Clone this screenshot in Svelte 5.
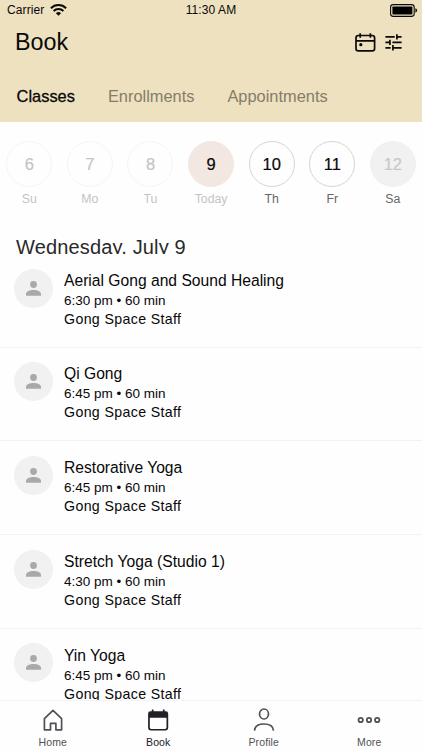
<script>
  const days = [
    { n: 6, label: 'Su', kind: 'past' },
    { n: 7, label: 'Mo', kind: 'past' },
    { n: 8, label: 'Tu', kind: 'past' },
    { n: 9, label: 'Today', kind: 'today' },
    { n: 10, label: 'Th', kind: 'open' },
    { n: 11, label: 'Fr', kind: 'open' },
    { n: 12, label: 'Sa', kind: 'closed' }
  ];
  const classes = [
    { title: 'Aerial Gong and Sound Healing', time: '6:30 pm' },
    { title: 'Qi Gong', time: '6:45 pm' },
    { title: 'Restorative Yoga', time: '6:45 pm' },
    { title: 'Stretch Yoga (Studio 1)', time: '4:30 pm' },
    { title: 'Yin Yoga', time: '6:45 pm' }
  ];
</script>

<div class="screen">
  <header>
    <div class="status">
      <div class="carrier">
        <span>Carrier</span>
        <svg width="17" height="12" viewBox="0 0 17 12" fill="none" stroke="#0b0a08" stroke-width="2">
          <path d="M.9 4.2a10.8 10.8 0 0 1 15.2 0M3.6 7a7 7 0 0 1 9.8 0" />
          <path d="M5.9 9.2a3.7 3.7 0 0 1 5.2 0L8.5 11.8z" fill="#0b0a08" stroke="none" />
        </svg>
      </div>
      <span class="clock">11:30 AM</span>
      <svg class="battery" width="28" height="13" viewBox="0 0 28 13">
        <rect x=".6" y=".6" width="23.6" height="11.8" rx="2.6" fill="none" stroke="#0b0a08" stroke-width="1.1" />
        <rect x="2.4" y="2.4" width="20" height="8.2" rx=".8" fill="#000" />
        <path d="M25.4 4.3q1.7.6 1.7 2.2t-1.7 2.2z" fill="#0b0a08" />
      </svg>
    </div>
    <div class="title">
      <h1>Book</h1>
      <div class="actions">
        <svg width="21" height="19" viewBox="0 0 21 19" fill="none" stroke="#0b0a08" stroke-width="1.7">
          <rect x="1" y="2.5" width="18.6" height="15.3" rx="2.4" />
          <path d="M1 7.8h18.6M5.2.3v4.5M15.4.3v4.5" />
          <circle cx="5.8" cy="11.7" r="1.6" fill="#0b0a08" stroke="none" />
        </svg>
        <svg width="17" height="17" viewBox="0 0 17 17" fill="none" stroke="#0b0a08" stroke-width="1.7">
          <path d="M.4 2.9h9.3M11.9 2.9h4.7M11.9.2v5.4M.4 8.4h4.5M7.4 8.4h9.2M4.9 5.8v5.3M.4 13.8h5.2M7.9 13.8h8.7M7.9 11.1v5.5" />
        </svg>
      </div>
    </div>
    <nav class="tabs">
      <span class="active">Classes</span>
      <span>Enrollments</span>
      <span>Appointments</span>
    </nav>
  </header>

  <section class="week">
    {#each days as d}
      <div class="day {d.kind}">
        <div class="num">{d.n}</div>
        <span>{d.label}</span>
      </div>
    {/each}
  </section>

  <h2>Wednesday, July 9</h2>

  <main>
    {#each classes as c}
      <article>
        <div class="avatar">
          <svg width="15" height="15" viewBox="0 0 15 15" fill="#a9a9a9">
            <circle cx="7.5" cy="3.5" r="3.4" />
            <path d="M0 14.8v-1.9C0 10.3 4 9 7.5 9s7.5 1.3 7.5 3.9v1.9z" />
          </svg>
        </div>
        <div class="info">
          <div class="name">{c.title}</div>
          <div class="time">{c.time} • 60 min</div>
          <div class="staff">Gong Space Staff</div>
        </div>
      </article>
    {/each}
  </main>

  <footer>
    <div class="item">
      <svg width="24" height="24" viewBox="0 0 24 24" fill="none" stroke="#505156" stroke-width="1.7">
        <path d="M3.4 10.6L12 2.4l8.6 8.200v11.200h-5.700v-6.400H9.500v6.400H3.400z" stroke-linejoin="round" />
      </svg>
      <span>Home</span>
    </div>
    <div class="item current">
      <svg width="24" height="24" viewBox="0 0 24 24">
        <path d="M4.500 3.300h1.300V1.600h1.700v1.700h9.400V1.600h1.700v1.700h1.200a2.400 2.400 0 0 1 2.400 2.400v14.400a2.400 2.400 0 0 1-2.400 2.400H4.500a2.400 2.400 0 0 1-2.400-2.400V5.700a2.400 2.400 0 0 1 2.400-2.400zM3.800 9.800v9.700q0 1.400 1.400 1.400h13.900q1.400 0 1.400-1.400V9.800z" fill="#202126" fill-rule="evenodd" />
      </svg>
      <span>Book</span>
    </div>
    <div class="item">
      <svg width="24" height="24" viewBox="0 0 24 24" fill="none" stroke="#505156" stroke-width="1.7">
        <ellipse cx="12" cy="6" rx="4.500" ry="5" />
        <path d="M2.500 22.600c.3-4.400 4.200-6.600 9.500-6.600s9.200 2.200 9.500 6.600" />
      </svg>
      <span>Profile</span>
    </div>
    <div class="item">
      <svg width="24" height="24" viewBox="0 0 24 24" fill="none" stroke="#505156" stroke-width="1.8">
        <circle cx="3.700" cy="12" r="2.200" />
        <circle cx="12" cy="12" r="2.200" />
        <circle cx="20.200" cy="12" r="2.200" />
      </svg>
      <span>More</span>
    </div>
  </footer>
</div>

<style>
  :global(body) { margin: 0; background: #fff; }
  .screen {
    width: 422px; height: 750px; overflow: hidden; display: flex; flex-direction: column;
    font-family: "Liberation Sans", Arial, sans-serif; color: #080808; background: #fefefe;
  }
  svg { display: block; flex: none; }
  span, .name, .time, .staff, h1, h2 { white-space: nowrap; }
  header { height: 122px; flex: none; background: #ede1c0; }
  .status {
    height: 20px; box-sizing: border-box; padding: 0 4px 0 7px; display: grid;
    grid-template-columns: 1fr auto 1fr; align-items: center; font-size: 12px; line-height: 20px;
  }
  .carrier { display: flex; align-items: center; gap: 6px; letter-spacing: .1px; }
  .clock { letter-spacing: .1px; margin: 0 3px 0 0; }
  .battery { justify-self: end; }
  .title { height: 45px; padding: 0 20px 0 15px; display: flex; justify-content: space-between; align-items: center; }
  h1 { margin: 0; font-size: 23.3px; line-height: 45px; font-weight: 400; }
  .actions { display: flex; align-items: center; gap: 9px; }
  .tabs { display: flex; gap: 33px; padding: 21px 0 0 16.6px; font-size: 16.4px; line-height: 20px; color: #857c69; }
  .tabs .active { color: #080808; -webkit-text-stroke: .3px #080808; }
  .week { flex: none; width: 424.2px; height: 91px; margin: 19px 0 0 -1px; display: grid; grid-template-columns: repeat(7, 1fr); }
  .day { display: flex; flex-direction: column; align-items: center; font-size: 12.3px; line-height: 16px; color: #666; }
  .num {
    width: 46px; height: 46px; box-sizing: border-box; border: 1px solid #d5d5d5; border-radius: 50%;
    line-height: 45px; text-align: center; font-size: 16.5px; color: #080808; margin-bottom: 4px;
    -webkit-text-stroke: .2px;
  }
  .past { color: #c4c4c4; }
  .past .num { color: #c4c4c4; border-color: #f5f5f5; }
  .today { color: #c4c4c4; }
  .today .num { background: #f3e7e2; border-color: #f3e7e2; }
  .closed .num { background: #f1f1f1; border-color: #f1f1f1; color: #c8c8c8; }
  h2 { flex: none; margin: 3px 0 0 16px; height: 19px; overflow: hidden; font-size: 20px; line-height: 25px; font-weight: 400; color: #292929; letter-spacing: .16px; }
  main { flex: 1; min-height: 0; overflow: hidden; }
  article { height: 93.7px; box-sizing: border-box; padding: 14.7px 0 0 14px; display: flex; gap: 11px; border-bottom: 1px solid #f2f2f2; }
  .avatar { flex: none; width: 39px; height: 39px; border-radius: 50%; background: #f1f1f1; display: grid; place-items: center; }
  .info { padding-top: 2.1px; }
  .name { font-size: 15.65px; line-height: 20px; }
  .time { font-size: 13.5px; line-height: 19px; }
  .staff { font-size: 14.2px; line-height: 19px; letter-spacing: .35px; }
  footer { flex: none; height: 50px; box-sizing: border-box; border-top: 1px solid #f3f3f3; display: grid; grid-template-columns: repeat(4, 1fr); background: #fefefe; }
  .item { display: flex; flex-direction: column; align-items: center; padding-top: 7px; font-size: 10.5px; line-height: 14px; color: #505156; letter-spacing: .1px; }
  .item span { margin-top: 3px; }
  .current { color: #202126; }
</style>
